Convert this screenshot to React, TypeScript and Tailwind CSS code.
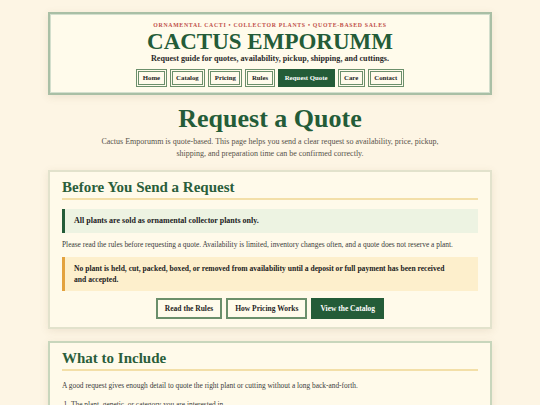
import React from 'react';

const serif = { fontFamily: '"Liberation Serif", Georgia, "Times New Roman", serif' };

const navItems = ['Home', 'Catalog', 'Pricing', 'Rules', 'Request Quote', 'Care', 'Contact'];

// ページヘッダー
function Header() {
  return (
    <header className="border-2 border-[#a9bfa5] bg-[#fffbeb] px-4 pt-[7px] pb-[6px] text-center shadow-[inset_0_0_0_1px_#d3dfcd,0_2px_8px_rgba(120,100,60,0.12)]">
      <p className="text-[5.8px] font-bold uppercase tracking-[0.12em] text-[#c0504a] leading-[8px]">
        Ornamental Cacti • Collector Plants • Quote-Based Sales
      </p>
      <h1 className="mt-[2px] text-[23px] font-bold leading-[22px] text-[#245c38]">CACTUS EMPORUMM</h1>
      <p className="mt-[1px] text-[8.1px] font-bold leading-[10px] text-[#2a2a2a]">
        Request guide for quotes, availability, pickup, shipping, and cuttings.
      </p>
      <nav className="mt-[5px] flex justify-center gap-[3px]">
        {navItems.map(item => (
          <a
            key={item}
            className={
              item === 'Request Quote'
                ? 'flex h-[18px] items-center border-[3px] border-[#245c38] bg-[#245c38] px-[4px] text-[6.8px] font-bold text-white'
                : 'flex h-[18px] items-center border-[3px] border-double border-[#6b8f6b] bg-[#fffbeb] px-[3.5px] text-[6.8px] font-bold text-[#1f1f1f]'
            }
          >
            {item}
          </a>
        ))}
      </nav>
    </header>
  );
}

function Card({ title, children, border }: { title: string; children: React.ReactNode; border: string }) {
  return (
    <section className={`border-2 ${border} bg-[#fffaea] px-3 pt-[7px] pb-[8px] shadow-[0_2px_8px_rgba(120,100,60,0.12)]`}>
      <h2 className="border-b-2 border-[#f3dfa8] pb-[2px] text-[15px] font-bold leading-[17px] text-[#2b5e3b]">{title}</h2>
      {children}
    </section>
  );
}

export default function App() {
  return (
    <div className="min-h-screen bg-[#fdf5e4] pt-[12px]" style={serif}>
      <div className="mx-auto w-[444px]">
        <Header />

        <div className="mt-[10px] text-center">
          <h2 className="text-[26px] font-bold leading-[28px] text-[#245c38]">Request a Quote</h2>
          <p className="mx-auto mt-[3px] w-[350px] text-[8px] leading-[12px] text-[#57524a]">
            Cactus Emporumm is quote-based. This page helps you send a clear request so availability, price, pickup,
            shipping, and preparation time can be confirmed correctly.
          </p>
        </div>

        <div className="mt-[10px]">
          <Card title="Before You Send a Request" border="border-[#e2e2cc]">
            <div className="mt-[9px] border-l-[3px] border-[#245c38] bg-[#edf3e2] px-[9px] py-[7px] text-[8px] font-bold leading-[10px] text-[#222]">
              All plants are sold as ornamental collector plants only.
            </div>
            <p className="mt-[7px] text-[7.4px] leading-[10px] text-[#3a3a3a]">
              Please read the rules before requesting a quote. Availability is limited, inventory changes often, and a
              quote does not reserve a plant.
            </p>
            <div className="mt-[7px] border-l-[3px] border-[#e3a23e] bg-[#fdefcc] pl-[9px] pr-[4px] py-[6px] text-[7.6px] font-bold leading-[11px] text-[#222]">
              No plant is held, cut, packed, boxed, or removed from availability until a deposit or full payment has
              been received
              <br />
              and accepted.
            </div>
            <div className="mt-[7px] flex justify-center gap-[4px]">
              <a className="flex h-[21px] items-center border-2 border-[#6b8f6b] bg-[#fffbeb] px-[7px] text-[7.5px] font-bold text-[#1f1f1f]">
                Read the Rules
              </a>
              <a className="flex h-[21px] items-center border-2 border-[#6b8f6b] bg-[#fffbeb] px-[7px] text-[7.5px] font-bold text-[#1f1f1f]">
                How Pricing Works
              </a>
              <a className="flex h-[21px] items-center border-2 border-[#245c38] bg-[#245c38] px-[7px] text-[7.5px] font-bold text-white">
                View the Catalog
              </a>
            </div>
          </Card>
        </div>

        <div className="mt-[12px]">
          <Card title="What to Include" border="border-[#c8d6bc]">
            <p className="mt-[10px] text-[7.4px] leading-[10px] text-[#3a3a3a]">
              A good request gives enough detail to quote the right plant or cutting without a long back-and-forth.
            </p>
            <ol className="mt-[9px] list-decimal pl-[9px] text-[7.4px] leading-[10px] text-[#3a3a3a]">
              <li>The plant, genetic, or category you are interested in.</li>
              <li>Whether you want a whole plant or a cutting.</li>
            </ol>
          </Card>
        </div>
      </div>
    </div>
  );
}
